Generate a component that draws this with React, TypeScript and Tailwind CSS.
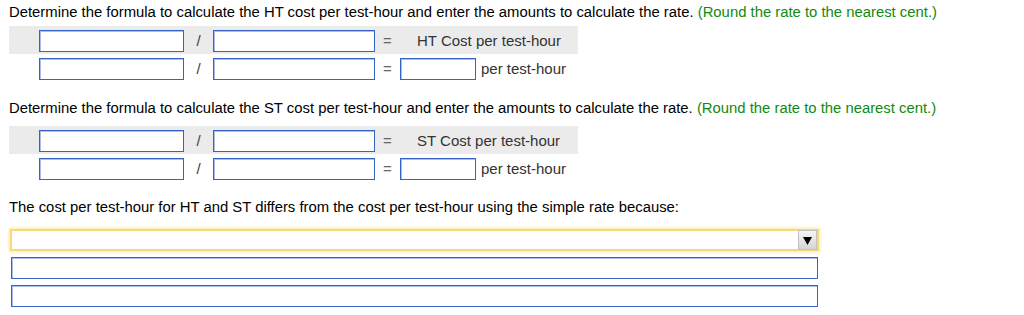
import React from "react";

function Box({ className = "" }: { className?: string }) {
  return (
    <div
      className={`h-[22px] border border-[#3564c6] bg-white shadow-[inset_1px_1px_0_#a8bde9] ${className}`}
    />
  );
}

function FormulaRow({ shaded, label }: { shaded?: boolean; label?: string }) {
  return (
    <div className="flex items-center">
      <Box className="w-[145px]" />
      <span className="w-[29px] text-center text-[#4a3a2a]">/</span>
      <Box className="w-[162px]" />
      <span className="w-[25px] text-center text-[#666]">=</span>
      {shaded ? (
        <span className="pl-[17px] text-[#333]">{label}</span>
      ) : (
        <>
          <Box className="w-[76px]" />
          <span className="pl-[5px] text-[#333]">per test-hour</span>
        </>
      )}
    </div>
  );
}

function RateBlock({ label }: { label: string }) {
  return (
    <div className="ml-[9px]">
      <div className="w-[569px] h-[28px] bg-[#ebebeb] pl-[30px] pt-[4px]">
        <FormulaRow shaded label={label} />
      </div>
      <div className="pl-[30px] mt-[4px]">
        <FormulaRow />
      </div>
    </div>
  );
}

function Heading({ topic, className = "" }: { topic: string; className?: string }) {
  return (
    <p className={`pl-[9px] leading-[18px] text-[14.85px] text-black ${className}`}>
      Determine the formula to calculate the {topic} cost per test-hour and enter the amounts to
      calculate the rate. <span className="text-[#108a10]">(Round the rate to the nearest cent.)</span>
    </p>
  );
}

export default function App() {
  return (
    <div className="w-[1024px] h-[315px] overflow-hidden bg-white font-['Liberation_Sans',Arial,sans-serif] text-[15px]">
      <Heading topic="HT" className="pt-[3px]" />
      <div className="mt-[5px]">
        <RateBlock label="HT Cost per test-hour" />
      </div>

      <Heading topic="ST" className="mt-[18px]" />
      <div className="mt-[9px]">
        <RateBlock label="ST Cost per test-hour" />
      </div>

      <p className="pl-[9px] mt-[18px] leading-[18px] text-[14.85px] text-black">
        The cost per test-hour for HT and ST differs from the cost per test-hour using the simple rate because:
      </p>

      <div className="ml-[10px] mt-[13px] w-[809px] h-[22px] flex justify-end items-center border-2 border-[#f6d978] bg-white shadow-[0_0_3px_1px_#fbe6a0]">
        <div className="w-[19px] h-[20px] flex items-center justify-center border border-[#c2c2c2] bg-gradient-to-b from-[#f6f6f6] to-[#d4d4d4]">
          <svg width="9" height="9" viewBox="0 0 9 9">
            <path d="M0 1 L9 1 L4.5 9 Z" fill="#000" />
          </svg>
        </div>
      </div>

      <div className="ml-[11px] mt-[6px] flex flex-col gap-[6px]">
        <Box className="w-[807px]" />
        <Box className="w-[807px]" />
      </div>
    </div>
  );
}
